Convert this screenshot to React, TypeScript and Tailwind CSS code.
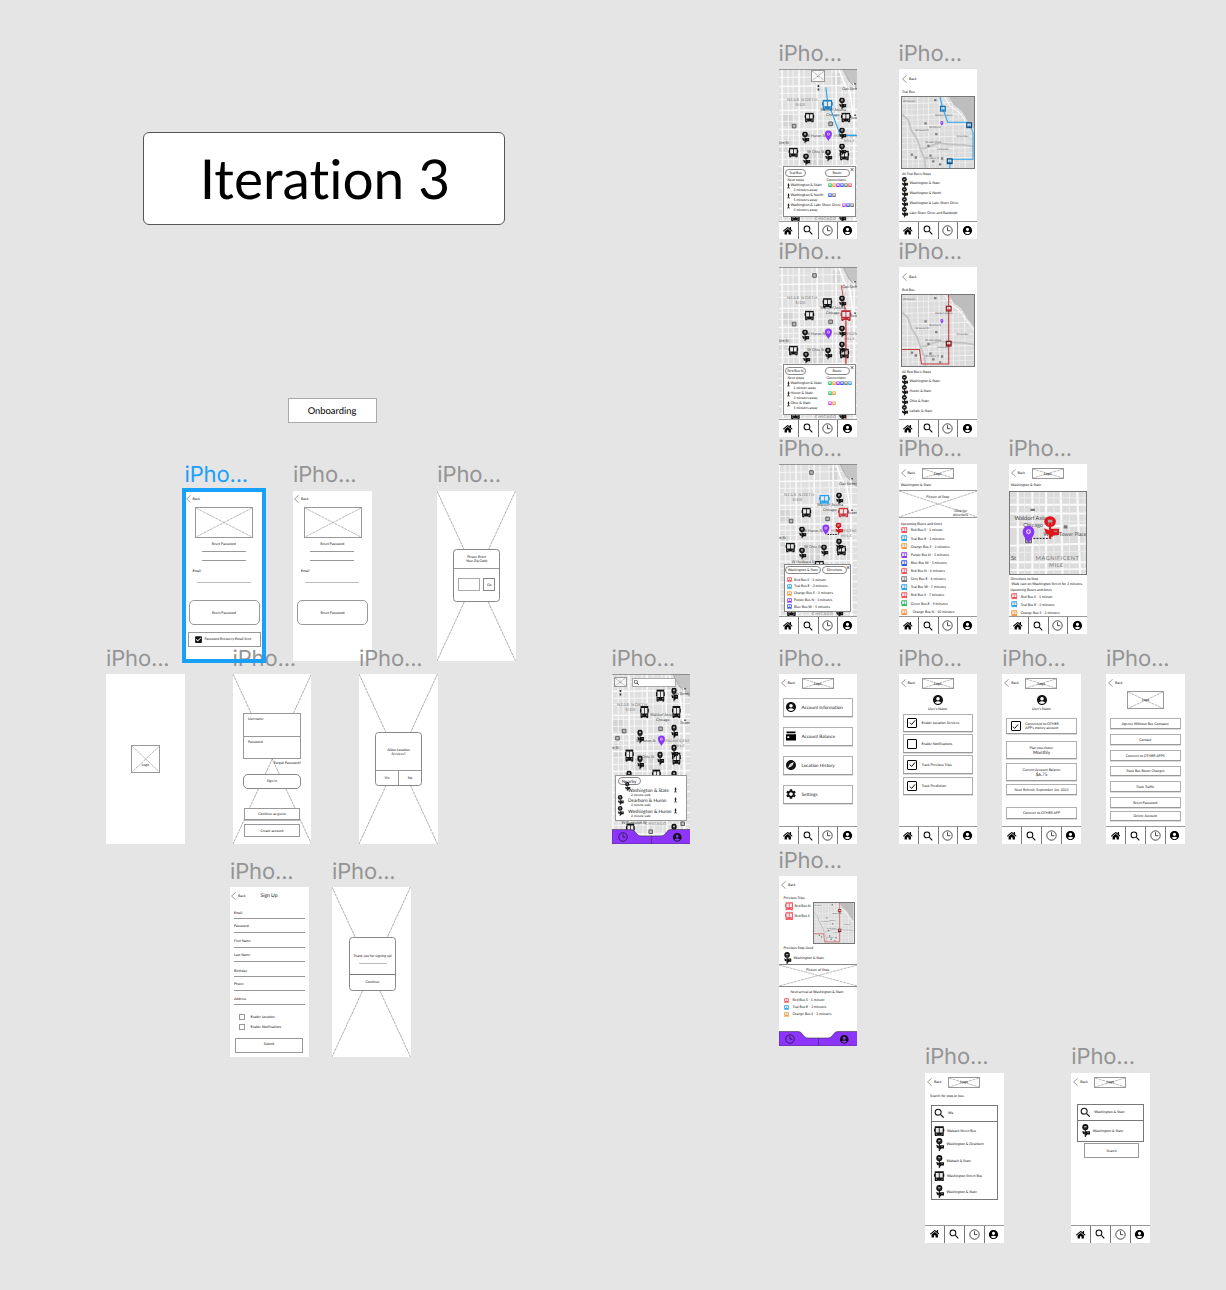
import React from "react";
import { FaHome } from "react-icons/fa";
import { MdAccountCircle, MdSearch, MdExplore, MdSettings, MdCheckBox } from "react-icons/md";

type Kids = { children?: React.ReactNode; className?: string };

const RED = "#f4505a";
const TEAL = "#25a4f0";
const ORANGE = "#f89a3c";
const PURPLE = "#8b35f5";
const BLUE = "#3055f0";
const GRAY = "#777777";
const GREEN = "#25c05a";
const PINK = "#e23be8";

/* ---------- glyphs ---------- */

function BusShape({ x, y, w = 10, h = 10, c = "#111" }: { x: number; y: number; w?: number; h?: number; c?: string }) {
  return (
    <svg x={x - w / 2} y={y - h / 2} width={w} height={h} viewBox="0 0 10 10" preserveAspectRatio="none">
      <path d="M.7.3h8.6v2.2H10v3h-.7v3.700H9V10H7.200V9.200H2.800V10H1V9.200H.7V5.500H0v-3h.7z" fill={c} />
      <path d="M1.700 1.900h2.900v4.300H1.700zM5.400 1.900h2.900v4.300H5.400z" fill="#e8e8e8" />
      <path d="M1.800 7.300h1.100v.7H1.800zM7.100 7.300h1.100v.7H7.100z" fill="#ccc" />
    </svg>
  );
}

function StopShape({ x, y, w = 8, h = 12, c = "#111" }: { x: number; y: number; w?: number; h?: number; c?: string }) {
  return (
    <svg x={x - w / 2} y={y - h / 2} width={w} height={h} viewBox="0 0 8 12" preserveAspectRatio="none">
      <circle cx="3.600" cy="2.900" r="2.800" fill={c} />
      <path d="M2.500 1.900h2.200v1.400H2.500z" fill="#aaa" />
      <path d="M2.600 4.100h.5M4.100 4.100h.5" stroke="#aaa" strokeWidth=".5" />
      <path d="M3.100 5.600h1V12h-1z" fill={c} />
      <path d="M3.600 6.600H8v3.200H5.400l-.6.9H3.600z" fill={c} />
      <path d="M.8 6.300l2.400 1.100v2.200L1.400 9z" fill={c} />
      <path d="M5.400 7.800h1.600" stroke="#aaa" strokeWidth=".5" />
    </svg>
  );
}

function PinShape({ x, y, s = 1 }: { x: number; y: number; s?: number }) {
  return (
    <g transform={`translate(${x} ${y}) scale(${s})`}>
      <path d="M0 5.500C-1.200 3.200-3.500 1.400-3.500-1.400a3.500 3.500 0 017 0C3.500 1.400 1.200 3.200 0 5.500z" fill={PURPLE} />
      <circle cx="0" cy="-1.400" r="1.500" fill="#d9c2fb" />
      <path d="M-.8-1.400h1.600M0-2.200v1.600" stroke={PURPLE} strokeWidth=".5" />
    </g>
  );
}

function Bus({ c = "#111", className = "h-[6px] w-[6px]" }: { c?: string; className?: string }) {
  return (
    <svg viewBox="0 0 10 10" className={`${className} shrink-0`}>
      <BusShape x={5} y={5} c={c} />
    </svg>
  );
}

function Stop({ className = "h-[11px] w-[8px]" }: { className?: string }) {
  return (
    <svg viewBox="0 0 8 12" className={`${className} shrink-0`}>
      <StopShape x={4} y={6} />
    </svg>
  );
}

function Walker() {
  return (
    <svg viewBox="0 0 4 7" className="h-[6px] w-[3px] shrink-0">
      <circle cx="2" cy="1" r="1" fill="#111" />
      <path d="M2 1.800v2.600M2 4.200L1 6.800M2 4.200l1 2.600M.9 3l1.100-.8 1 1" stroke="#111" strokeWidth="1.100" fill="none" />
    </svg>
  );
}

function Clock({ className = "h-[11px] w-[11px]" }: { className?: string }) {
  return (
    <svg viewBox="0 0 11 11" className={className} fill="none" stroke="#111" strokeWidth=".75">
      <circle cx="5.500" cy="5.500" r="4.700" />
      <path d="M5.500 2.200v3.500h2.800" />
    </svg>
  );
}

function WalletCard() {
  return (
    <svg viewBox="0 0 12 12" className="h-[12px] w-[12px] shrink-0">
      <path d="M1.500 1.500h9v1.700h-9zM1 4.300h10V10.500H1z" fill="#000" />
      <path d="M2.300 6.300h2v1.700h-2z" fill="#fff" />
    </svg>
  );
}

function Check({ on = true }: { on?: boolean }) {
  return (
    <span className="grid h-[10px] w-[10px] shrink-0 place-items-center rounded-[1px] border border-black">
      {on && (
        <svg viewBox="0 0 8 8" className="h-[7px] w-[7px]" fill="none" stroke="#000" strokeWidth="1.100">
          <path d="M1 4.200l2 2 4-4.600" />
        </svg>
      )}
    </span>
  );
}

function Cross({ className = "", stroke = "#8b8b8b" }: { className?: string; stroke?: string }) {
  return (
    <svg className={`absolute inset-0 h-full w-full ${className}`} viewBox="0 0 100 100" preserveAspectRatio="none">
      <path d="M0 0L100 100M100 0L0 100" stroke={stroke} strokeWidth=".6" strokeDasharray="3 .7" vectorEffect="non-scaling-stroke" />
    </svg>
  );
}

/* ---------- shared pieces ---------- */

function Frame({ at, children, selected = false }: { at: string; children?: React.ReactNode; selected?: boolean }) {
  return (
    <section className={`absolute ${at} h-[170px] w-[78.5px]`}>
      <h2
        className={`absolute -top-[28.5px] left-0 font-[Inter] text-[22px] leading-[26px] tracking-[-0.15px] whitespace-nowrap ${
          selected ? "text-[#18a0fb]" : "text-[#949494]"
        }`}
      >
        iPho...
      </h2>
      <div className="relative flex h-full w-full flex-col overflow-hidden bg-white text-[3.5px] leading-[4px] text-[#111]">{children}</div>
    </section>
  );
}

function T({ children, className = "" }: Kids) {
  return <p className={`h-[4px] shrink-0 whitespace-nowrap ${className}`}>{children}</p>;
}

function Back({ className = "mt-[5px] ml-[2px]" }: { className?: string }) {
  return (
    <div className={`flex h-[8px] shrink-0 items-center gap-[2px] ${className}`}>
      <svg viewBox="0 0 5 8" className="h-[8px] w-[5px]" fill="none" stroke="#555" strokeWidth=".6">
        <path d="M4.600.3L.6 4l4 3.700" />
      </svg>
      <span>Back</span>
    </div>
  );
}

function LogoBox({ className = "h-[11px] w-[32px]", children = "Logo" }: Kids) {
  return (
    <div className={`relative grid shrink-0 place-items-center border border-[#999] ${className}`}>
      <Cross />
      <span className="relative">{children}</span>
    </div>
  );
}

function Header() {
  return (
    <div className="flex h-[15px] shrink-0 items-end">
      <Back className="mb-[2px] ml-[2px] w-[21px]" />
      <LogoBox />
    </div>
  );
}

function Nav() {
  return (
    <nav className="absolute inset-x-0 bottom-0 flex h-[18px] border-t border-[#999] bg-white text-black">
      <span className="grid w-[20px] place-items-center border-r border-[#777]">
        <FaHome size={9.5} />
      </span>
      <span className="grid w-[20px] place-items-center border-r border-[#777] pr-[.5px]">
        <MdSearch size={12.5} />
      </span>
      <span className="grid w-[19.5px] place-items-center border-r border-[#777]">
        <Clock />
      </span>
      <span className="grid flex-1 place-items-center pr-[1px]">
        <MdAccountCircle size={11} />
      </span>
    </nav>
  );
}

function PurpleNav() {
  return (
    <nav className="absolute inset-x-0 bottom-0 flex h-[15px] items-center justify-between px-[6px] pt-[1px]">
      <svg viewBox="0 0 78.5 15" className="absolute inset-0 h-full w-full">
        <path d="M0 .6H19C24 .6 24 7 29 7H49C54 7 54 .6 59 .6H78.500V15H0z" fill="#8d35ff" stroke="#333" strokeWidth=".6" />
        <path d="M39.500 7v8" stroke="#333" strokeWidth=".6" />
      </svg>
      <Clock className="relative h-[10px] w-[10px]" />
      <MdAccountCircle size={10.5} className="relative mr-[2px]" />
    </nav>
  );
}

function Pill({ children, className = "" }: Kids) {
  return <span className={`grid h-[8px] place-items-center rounded-full border border-[#888] bg-white whitespace-nowrap ${className}`}>{children}</span>;
}

function Card({ children, className = "" }: Kids) {
  return (
    <div className={`mx-[4px] flex shrink-0 items-center border border-[#b0b0b0] border-b-[#999] bg-white whitespace-nowrap shadow-[0_.5px_.5px_#ddd] ${className}`}>
      {children}
    </div>
  );
}

function BusRow({ c, children, className = "" }: Kids & { c: string }) {
  return (
    <div className={`flex shrink-0 items-center whitespace-nowrap ${className}`}>
      <Bus c={c} className="h-[6.5px] w-[6.5px]" />
      <span className="ml-[3px]">{children}</span>
    </div>
  );
}

/* ---------- maps ---------- */

const VERTICALS = [3, 9, 14, 20, 25, 33, 38, 44, 53, 57, 63, 70, 75];
const HORIZONTALS = [8, 17, 24, 30, 41, 45, 52, 60, 66, 71, 77, 83, 90, 97, 104, 111, 118, 125, 132, 139, 146, 151, 160];

function StreetMap({ children, shift = 0 }: { children?: React.ReactNode; shift?: number }) {
  return (
    <svg className="absolute inset-0 h-full w-full" viewBox="0 0 78.5 170" fontFamily="Lato, sans-serif">
      <rect width="79" height="170" fill="#e0e0e0" />
      <g transform={`translate(${shift} 0)`}>
        <path d="M0 70h12v14H0zM25 84h19v13H25zM4 45h10v12H4zM53 4h8v14h-8z" fill="#d4d4d4" />
        <path d="M64 0h20v26L76 18 70 12z" fill="#c4c4c4" />
        <path d="M64 0l6 12 8 8 6 5" stroke="#adadad" strokeWidth="1" fill="none" />
        {VERTICALS.map((x, i) => (
          <path key={x} d={`M${x} ${x > 60 ? 14 : 0}L${x + 1} 170`} stroke="#fafafa" strokeWidth={i % 3 === 0 ? 1.6 : 0.8} />
        ))}
        {HORIZONTALS.map((y, i) => (
          <path key={y} d={`M-2 ${y + 0.5}L${y < 20 ? 66 : 84} ${y - 0.5}`} stroke="#fafafa" strokeWidth={i % 3 === 1 ? 1.4 : 0.8} />
        ))}
        <path d="M60 0l5 14 6 9 4 30v117" stroke="#fff" strokeWidth="1.600" fill="none" />
        <g fontSize="4" fill="#777" letterSpacing=".5">
          <text x="8" y="32">NEAR NORTH</text>
          <text x="16.500" y="37">SIDE</text>
          <text x="55" y="67.500" letterSpacing="0" fontSize="3.8">MAGNIFICENT</text>
          <text x="65" y="72.500">MILE</text>
          <text x="36" y="151">CHICAGO</text>
        </g>
        <g fontSize="3.8" fill="#444">
          <text x="63" y="20.500">Oak Street</text>
          <text x="41" y="42">Waldorf Astoria</text>
          <text x="47" y="46.500">Chicago</text>
          <text x="71" y="50">Tower</text>
          <text x="27" y="67.500">W Huron St</text>
          <text x="-1" y="74.500">Erie St</text>
          <text x="28" y="83.500">W Ohio St</text>
        </g>
        <path d="M13.300 55.300h3.600v3.600h-3.600zM49.800 53h3.600v3.600h-3.600z" fill="#bbb" stroke="#555" strokeWidth=".9" />
        <path d="M76 14v1.500M76 45.500v1.500" stroke="#333" strokeWidth="1.400" />
      </g>
      <path d="M0 .4H79" stroke="#777" strokeWidth=".8" />
      <g transform="translate(-.6 .4)">{children}</g>
    </svg>
  );
}

const CITY_V = [5, 10, 16, 22, 27, 33, 38, 43, 52, 58, 64];
const CITY_H = [6, 12, 18, 23, 29, 35, 41, 47, 53, 58, 63, 68];

function CityMap({ children, className }: Kids) {
  return (
    <svg className={`shrink-0 border border-[#777] ${className}`} viewBox="0 0 74 73" preserveAspectRatio="none" fontFamily="Lato, sans-serif">
      <rect width="74" height="73" fill="#dcdcdc" />
      {CITY_V.map((x, i) => (
        <path key={x} d={`M${x} 0L${x + 1} 73`} stroke="#f3f3f3" strokeWidth={i % 2 ? 0.5 : 0.9} />
      ))}
      {CITY_H.map((y, i) => (
        <path key={y} d={`M0 ${y + 1}L74 ${y - 1}`} stroke="#f3f3f3" strokeWidth={i % 2 ? 0.5 : 0.9} />
      ))}
      <path d="M48 0L53 8 61 14 67 24 74 33V0z" fill="#bdbdbd" />
      <path d="M0 18L6 23 10 35 16 44 19 54 23 63 24 73M20 53C32 53 30 46 43 48S58 48 74 51" stroke="#c2c2c2" strokeWidth="1.800" fill="none" />
      <path d="M44 0l5 9 10 7 7 10 8 10" stroke="#fff" strokeWidth="1" fill="none" />
      <g fontSize="2.6" fill="#555">
        <text x="1" y="5">W Division</text>
        <text x="14" y="35">W Huron St</text>
        <text x="28" y="32">W Ohio St</text>
        <text x="24" y="47">W Lake Street</text>
        <text x="34" y="20">Waldorf Astoria</text>
        <text x="56" y="41">Illinois Bus</text>
        <text x="36" y="55">CHICAGO</text>
        <text x="24" y="64">W Adams St</text>
      </g>
      <path
        d="M33 2h2.400v2.400H33zM23 26h2.400v2.400H23zM34 37h2.400v2.400H34zM9 58h2.400v2.400H9zM13 61h2.400v2.400H13zM28 59h2.400v2.400H28zM26 49h2.400v2.400H26zM31 65h2.400v2.400H31zM40 62h2.400v2.400H40zM38 68h2.400v2.400H38z"
        fill="#808080"
      />
      {children}
    </svg>
  );
}

const RED_ROUTE = (
  <>
    <path d="M48 0V71H20L18 56H0" stroke="#c93a40" strokeWidth="1.100" fill="none" />
    <rect x="45" y="11" width="6" height="6" fill="#7d1d22" />
    <BusShape x={48} y={14} w={5} h={5} c="#c93a40" />
    <rect x="45" y="47" width="6" height="6" fill="#5a1215" />
    <BusShape x={48} y={50} w={5} h={5} c="#a32a30" />
  </>
);

/* ---------- popups ---------- */

type NextStop = { name: string; away: string; colors: string[]; near?: boolean };

function StopsPopup({ bus, stops }: { bus: string; stops: NextStop[] }) {
  return (
    <div className="absolute top-[97px] left-[4px] flex h-[50.5px] w-[73px] flex-col border border-[#888] bg-white">
      <span className="absolute top-[.5px] right-[.5px] text-[7px] leading-[4px] text-[#333]">×</span>
      <div className="mt-[1.5px] flex justify-between pr-[5px] pl-[1.5px]">
        <Pill className="w-[21px]">{bus}</Pill>
        <Pill className="w-[25px]">Route</Pill>
      </div>
      <div className="mt-[1px] flex pl-[4px]">
        <T className="w-[39px]">Next stops</T>
        <T>Connections</T>
      </div>
      {stops.map((s) => (
        <div key={s.name} className="relative mt-[1px] flex h-[9px] shrink-0 items-start gap-[1px] pl-[3px]">
          <Walker />
          <div className={s.near ? "" : "w-[36px] shrink-0"}>
            <T className="text-[3.6px]">{s.name}</T>
            <T className="mt-[1px] pl-[3px]">{s.away}</T>
          </div>
          <div className="flex">
            {s.colors.map((c, i) => (
              <Bus key={i} c={c} className="h-[4.5px] w-[4px]" />
            ))}
          </div>
        </div>
      ))}
    </div>
  );
}

/* ---------- small lists ---------- */

function StopList({ title, stops }: { title: string; stops: string[] }) {
  return (
    <>
      <T className="mt-[3px] mb-[.5px] ml-[3.5px]">{title}</T>
      {stops.map((s) => (
        <div key={s} className="flex h-[10px] shrink-0 items-center gap-[1px] pt-[2px] pl-[2.5px] whitespace-nowrap">
          <Stop className="h-[10.5px] w-[7.5px]" />
          <span>{s}</span>
        </div>
      ))}
    </>
  );
}

function ResetForm() {
  return (
    <>
      <Back className="mt-[4px] ml-[1px]" />
      <LogoBox className="mt-[4px] ml-[10.5px] h-[31px] w-[58px]">{""}</LogoBox>
      <T className="mt-[4.5px] text-center">Reset Password</T>
      <hr className="mt-[5px] ml-[17px] w-[44px] shrink-0 border-[#999]" />
      <hr className="mt-[8px] ml-[17px] w-[44px] shrink-0 border-[#999]" />
      <T className="mt-[8px] ml-[8px]">Email</T>
      <hr className="mt-[9px] ml-[12px] w-[54px] shrink-0 border-[#bbb]" />
      <div className="mt-[17px] ml-[4px] grid h-[25px] w-[71px] shrink-0 place-items-center rounded-[5px] border border-[#999]">Reset Password</div>
    </>
  );
}

function Dialog({ children, className = "" }: Kids) {
  return (
    <>
      <Cross stroke="#777" />
      <div className={`relative ml-[16px] flex h-[53.5px] w-[47px] shrink-0 flex-col rounded-[3.5px] border border-[#888] bg-white text-center ${className}`}>{children}</div>
    </>
  );
}

const UPCOMING: [string, string][] = [
  [RED, "Red Bus S - 1 minute"],
  [TEAL, "Teal Bus E - 2 minutes"],
  [ORANGE, "Orange Bus S - 2 minutes"],
  [PURPLE, "Purple Bus N - 3 minutes"],
  [BLUE, "Blue Bus W - 5 minutes"],
  [RED, "Red Bus N - 6 minutes"],
  [GRAY, "Grey Bus E - 6 minutes"],
  [TEAL, "Teal Bus W - 7 minutes"],
  [RED, "Red Bus S - 7 minutes"],
  [GREEN, "Green Bus E - 9 minutes"],
  [ORANGE, "Orange Bus N - 10 minutes"],
];

const FIELDS: [string, string, string][] = [
  ["Email", "mt-[10.5px]", "mt-[3px]"],
  ["Password", "mt-[5px]", "mt-[4px]"],
  ["First Name", "mt-[6px]", "mt-[4px]"],
  ["Last Name", "mt-[5px]", "mt-[4px]"],
  ["Birthday", "mt-[7px]", "mt-[3px]"],
  ["Phone", "mt-[5px]", "mt-[4px]"],
  ["Address", "mt-[6px]", "mt-[3px]"],
];

const LINKS: [string, string][] = [
  ["Agency Without Bus Company", "mt-[9px]"],
  ["Contact", "mt-[5.5px]"],
  ["Connect to OTHER APPS", "mt-[5.5px]"],
  ["Track Bus Route Changes", "mt-[5px]"],
  ["Track Traffic", "mt-[5px]"],
  ["Reset Password", "mt-[5.5px]"],
  ["Delete Account", "mt-[3px]"],
];

const HOME_BUSES = [[49, 21], [33, 37.5], [65, 37.5], [18, 81], [65, 84], [45, 101], [19, 155]];
const HOME_STOPS = [[63, 20], [29, 62], [63, 57], [63, 77], [49, 84], [29, 88], [18, 103], [63, 103], [63, 156]];

export default function App() {
  return (
    <main className="relative h-[1290px] w-[1226px] overflow-hidden bg-[#e5e5e5] font-[Lato,sans-serif] text-black [font-variant-ligatures:none] [text-rendering:geometricPrecision]">
      <h1 className="absolute top-[132px] left-[143px] grid h-[93px] w-[362px] place-items-center rounded-[6px] border border-[#555] bg-white pl-[2px] text-[55px] leading-none">
        Iteration 3
      </h1>
      <div className="absolute top-[398px] left-[288px] grid h-[25px] w-[89px] place-items-center border border-[#aaa] bg-white pt-[3px] pr-[1px] text-[9.4px] leading-none">
        Onboarding
      </div>

      {/* Bus routes */}
      <Frame at="left-[778.5px] top-[69px]">
        <StreetMap>
          <path d="M47.500 18L49 31 62 66H80" stroke={TEAL} strokeWidth="1.100" fill="none" />
          <BusShape x={31} y={48} />
          <BusShape x={67.5} y={48} />
          <BusShape x={15} y={83} />
          <BusShape x={66} y={86} />
          <StopShape x={64} y={34} />
          <StopShape x={27} y={68} />
          <StopShape x={64} y={64} />
          <StopShape x={50} y={86} />
          <StopShape x={64} y={80} />
          <StopShape x={28} y={90} />
          <BusShape x={49} y={35.5} w={11} h={11} c="#1a7fc0" />
          <PinShape x={50} y={66} />
          <BusShape x={17} y={147} />
          <StopShape x={64} y={147} />
          <path d="M40 15.500v2M40 19v2" stroke="#333" strokeWidth="1.600" />
        </StreetMap>
        <LogoBox className="absolute top-[1px] left-[32px] h-[11.5px] w-[14.5px] bg-white/70">⌄</LogoBox>
        <StopsPopup
          bus="Teal Bus"
          stops={[
            { name: "Washington & State", away: "2 minutes away", colors: [GREEN, ORANGE, PURPLE, BLUE, GRAY, RED] },
            { name: "Washington & North", away: "5 minutes away", colors: [BLUE, GRAY] },
            { name: "Washington & Lake Shore Drive", away: "5 minutes away", colors: [PINK, BLUE, GRAY], near: true },
          ]}
        />
        <Nav />
      </Frame>

      <Frame at="left-[898.5px] top-[69px]">
        <Back className="mt-[5.5px] ml-[3.5px]" />
        <T className="mt-[7px] ml-[3.5px]">Teal Bus</T>
        <CityMap className="mt-[2.5px] ml-[2.5px] h-[73px] w-[74px]">
          <path d="M39 0L42 12 47 26H68L73 36V64H50L49 73" stroke={TEAL} strokeWidth="1.100" fill="none" />
          <rect x="39" y="9" width="6" height="6" fill="#10639b" />
          <BusShape x={42} y={12} w={5} h={5} c="#2b9be0" />
          <rect x="66" y="26" width="6" height="6" fill="#0d3f66" />
          <BusShape x={69} y={29} w={5} h={5} c="#2b7fc0" />
          <rect x="46" y="63" width="6" height="6" fill="#0d3f66" />
          <BusShape x={49} y={66} w={5} h={5} c="#1a7fc0" />
          <PinShape x={41} y={27} s={0.45} />
        </CityMap>
        <StopList title="All Teal Bus's Stops" stops={["Washington & State", "Washington & North", "Washington & Lake Shore Drive", "Lake Shore Drive and Randolph"]} />
        <Nav />
      </Frame>

      <Frame at="left-[778.5px] top-[267px]">
        <StreetMap>
          <path d="M63 18L67.500 48V170" stroke="#d0353c" strokeWidth=".9" fill="none" />
          <path d="M34.300 6.300h3.600v3.600h-3.600z" fill="#bbb" stroke="#555" strokeWidth=".9" />
          <BusShape x={49} y={35.5} />
          <BusShape x={31} y={48} />
          <BusShape x={67.5} y={48} w={11} h={11} c="#b92d33" />
          <BusShape x={15} y={83} />
          <BusShape x={66} y={86} />
          <StopShape x={64} y={34} />
          <StopShape x={27} y={68} />
          <StopShape x={64} y={64} />
          <StopShape x={50} y={86} />
          <StopShape x={64} y={80} />
          <StopShape x={28} y={90} />
          <PinShape x={50} y={66} />
          <BusShape x={17} y={147} />
          <StopShape x={64} y={147} />
          <path d="M67.500 54V97" stroke="#d0353c" strokeWidth=".7" />
        </StreetMap>
        <StopsPopup
          bus="Red Bus N"
          stops={[
            { name: "Washington & State", away: "1 minute away", colors: [GREEN, ORANGE, PURPLE, BLUE, GRAY, TEAL] },
            { name: "Huron & State", away: "3 minutes away", colors: [GREEN, ORANGE] },
            { name: "Ohio & State", away: "5 minutes away", colors: [PINK, ORANGE] },
          ]}
        />
        <Nav />
      </Frame>

      <Frame at="left-[898.5px] top-[267px]">
        <Back className="mt-[5.5px] ml-[3.5px]" />
        <T className="mt-[7px] ml-[3.5px]">Red Bus</T>
        <CityMap className="mt-[2.5px] ml-[2.5px] h-[73px] w-[74px]">
          {RED_ROUTE}
          <PinShape x={41} y={27} s={0.45} />
        </CityMap>
        <StopList title="All Red Bus's Stops" stops={["Washington & State", "Huron & State", "Ohio & State", "LaSalle & State"]} />
        <Nav />
      </Frame>

      {/* Stop details */}
      <Frame at="left-[778.5px] top-[464.3px]">
        <StreetMap shift={-3}>
          <path d="M31.300 6.300h3.600v3.600h-3.600z" fill="#bbb" stroke="#555" strokeWidth=".9" />
          <BusShape x={46} y={35} w={11} h={10} c={TEAL} />
          <BusShape x={28} y={48} />
          <BusShape x={65} y={48} w={11} h={10} c="#c93a40" />
          <BusShape x={12} y={83} />
          <BusShape x={63} y={86} />
          <BusShape x={41} y={101} />
          <StopShape x={61} y={34} />
          <StopShape x={24} y={68} />
          <StopShape x={24} y={89} />
          <StopShape x={46} y={86} />
          <StopShape x={61} y={80} />
          <path d="M49 70H60" stroke="#111" strokeWidth="1" strokeDasharray="1.6 1" />
          <StopShape x={60.5} y={64} c="#d9141c" />
          <PinShape x={47.5} y={65} />
          <BusShape x={13} y={147} />
          <StopShape x={61} y={147} />
          <text x="13" y="98.500" fontSize="3.8" fill="#444">
            W Hubbard St
          </text>
        </StreetMap>
        <div className="absolute top-[100px] left-[5.5px] flex h-[48px] w-[67px] flex-col border border-[#888] bg-white">
          <span className="absolute top-[.5px] right-0 text-[7px] leading-[4px] text-[#333]">×</span>
          <div className="mt-[1px] mb-[2px] flex gap-[1px]">
            <Pill className="w-[36px]">Washington & State</Pill>
            <Pill className="w-[25px]">Directions</Pill>
          </div>
          {UPCOMING.slice(0, 5).map(([c, t]) => (
            <div key={t} className="flex h-[6.8px] shrink-0 items-center gap-[2px] pl-[2px] whitespace-nowrap">
              <Bus c={c} className="h-[5px] w-[5px]" />
              {t}
            </div>
          ))}
        </div>
        <Nav />
      </Frame>

      <Frame at="left-[898.5px] top-[464.3px]">
        <Header />
        <T className="mt-[3.5px] ml-[2.3px]">Washington & State</T>
        <div className="relative mt-[3px] flex h-[28px] shrink-0 flex-col border-y border-[#999]">
          <Cross />
          <T className="relative mt-[4px] text-center">Picture of Stop</T>
          <T className="relative mt-[10.5px] mr-[10px] text-right">Click for</T>
          <T className="relative mr-[9px] text-right">directions</T>
        </div>
        <T className="mt-[4px] ml-[2.3px]">Upcoming Buses and times</T>
        <div className="mt-[.5px] flex flex-col">
          {UPCOMING.map(([c, t], i) => (
            <BusRow key={i} c={c} className={i === 10 ? "h-[8.15px] pl-[2.7px] [&>span]:ml-[5px]" : "h-[8.15px] pl-[2.7px]"}>
              {t}
            </BusRow>
          ))}
        </div>
        <Nav />
      </Frame>

      <Frame at="left-[1008.5px] top-[464.3px]">
        <Header />
        <T className="mt-[3.5px] ml-[2.3px]">Washington & State</T>
        <svg viewBox="0 0 78.5 84" className="mt-[4px] h-[84px] w-full shrink-0 border border-[#777]" fontFamily="Lato, sans-serif">
          <rect width="79" height="84" fill="#dcdcdc" />
          <path d="M8 0V84M23 0V84M37 0V84M52 0L54 84M69 0L72 84" stroke="#fafafa" strokeWidth="2.200" />
          <path d="M0 13H79M0 22H79M0 36L79 34M0 55L79 53M0 72H79M0 80L79 79" stroke="#fafafa" strokeWidth="1.900" />
          <path d="M15 0V84M30 0V84M45 0V84M61 0V84M76 0V84M0 6H79M0 62L79 61M0 30H79" stroke="#eee" strokeWidth="1" />
          <g fontSize="5.8" fill="#444">
            <text x="4.500" y="28.500">Waldorf Astoria</text>
            <text x="13.500" y="35.500">Chicago</text>
            <text x="1" y="70">St</text>
            <text x="34.500" y="45.500" fontSize="5.4">Water Tower Place</text>
          </g>
          <g fontSize="5.6" fill="#777" letterSpacing=".6">
            <text x="26.500" y="69.500">MAGNIFICENT</text>
            <text x="40" y="77">MILE</text>
          </g>
          <path d="M21 17h4.500v2.500H21zM55 34h4v3.500H55z" fill="#777" />
          <path d="M16 46h6v6h-6z" fill="#bbb" stroke="#555" />
          <path d="M24 47.500H41" stroke="#111" strokeWidth="1" strokeDasharray="2 1.2" />
          <PinShape x={19} y={43} s={1.7} />
          <StopShape x={42} y={36.5} w={17} h={24} c="#e0161c" />
        </svg>
        <T className="mt-[2px] ml-[2px]">Directions to Stop</T>
        <T className="mt-[1.7px] ml-[3px]">Walk east on Washington Street for 2 minutes.</T>
        <T className="mt-[2px] ml-[2px]">Upcoming Buses and times</T>
        {UPCOMING.slice(0, 3).map(([c, t]) => (
          <BusRow key={t} c={c} className="h-[8.15px] pl-[2.7px]">
            {t}
          </BusRow>
        ))}
        <Nav />
      </Frame>

      {/* Home */}
      <Frame at="left-[611.5px] top-[674px]">
        <StreetMap shift={-3}>
          {HOME_BUSES.map(([x, y]) => (
            <BusShape key={`${x}-${y}`} x={x} y={y} w={9} h={12.5} />
          ))}
          {HOME_STOPS.map(([x, y]) => (
            <StopShape key={`${x}-${y}`} x={x} y={y} w={7.5} h={14} />
          ))}
          <PinShape x={50} y={66} />
          <path d="M4.300 62h3.600v3.600H4.300zM37.500 155.500h3.600v3.600h-3.600zM69.500 147.500h3.600v3.600h-3.600z" fill="#bbb" stroke="#555" strokeWidth=".9" />
          <path d="M9 15.500v2M9 19v2" stroke="#333" strokeWidth="1.600" />
          <text x="10" y="150" fontSize="3.8" fill="#444">
            W Randolph St
          </text>
        </StreetMap>
        <div className="relative flex h-[13px] items-end gap-[5px] pl-[2.5px]">
          <LogoBox className="h-[10px] w-[12.5px] bg-white/60">⌄</LogoBox>
          <div className="h-[9.5px] w-[44px] border border-[#aaa] bg-white">
            <MdSearch size={7} />
          </div>
        </div>
        <div className="absolute top-[101px] left-[3px] flex h-[46px] w-[72.5px] flex-col border border-[#999] bg-white">
          <Pill className="mt-[1px] ml-[2px] w-[23px] text-[4.6px]">Nearby</Pill>
          <Stop className="absolute top-[6px] left-[8px] h-[9px] w-[7px]" />
          {["Washington & State", "Dearborn & Huron", "Washington & Huron"].map((s, i) => (
            <div key={s} className="mt-[.5px] flex h-[10px] shrink-0 items-start pl-[1px]">
              <div className="w-[11.5px]">{i > 0 && <Stop className="-mt-[1px] h-[10px] w-[7px]" />}</div>
              <div className="w-[46px]">
                <T className="pt-[2px] text-[4.7px]">{s}</T>
                <T className="mt-[1.5px] pt-[1.5px] pl-[3px] text-[3.2px]">2 minute walk</T>
              </div>
              <div className="pt-[1px]">
                <Walker />
              </div>
            </div>
          ))}
        </div>
        <PurpleNav />
      </Frame>

      {/* Account */}
      <Frame at="left-[778.5px] top-[674.3px]">
        <Header />
        <div className="mt-[8.5px] flex flex-col gap-[10px] text-[4.6px]">
          <Card className="h-[19px] gap-[4.5px] pl-[1.5px]"><MdAccountCircle size={12} />Account Information</Card>
          <Card className="h-[19px] gap-[4.5px] pl-[1.5px]"><WalletCard />Account Balance</Card>
          <Card className="h-[19px] gap-[4.5px] pl-[1.5px]"><MdExplore size={12} />Location History</Card>
          <Card className="h-[19px] gap-[4.5px] pl-[1.5px]"><MdSettings size={12} />Settings</Card>
        </div>
        <Nav />
      </Frame>

      <Frame at="left-[898.5px] top-[674.3px]">
        <Header />
        <MdAccountCircle size={12} className="mx-auto mt-[4.5px] shrink-0" />
        <T className="mt-[1.5px] text-center">User's Name</T>
        <Card className="mt-[2.5px] h-[18px] gap-[4.5px] pl-[3.5px]"><Check />Enable Location Services</Card>
        <Card className="mt-[2.5px] h-[18.5px] gap-[4.5px] pl-[3.5px]"><Check on={false} />Enable Notifications</Card>
        <Card className="mt-[2.5px] h-[18.5px] gap-[4.5px] pl-[3.5px]"><Check />Track Previous Trips</Card>
        <Card className="mt-[3px] h-[18.5px] gap-[4.5px] pl-[3.5px]"><Check />Track Prediction</Card>
        <Nav />
      </Frame>

      <Frame at="left-[1002.3px] top-[674.3px]">
        <Header />
        <MdAccountCircle size={12} className="mx-auto mt-[4.5px] shrink-0" />
        <T className="mt-[1.5px] text-center">User's Name</T>
        <Card className="mt-[7px] h-[15.5px] gap-[4.5px] pl-[3.5px]">
          <Check />
          <span>Connected to OTHER<br />APP's money account</span>
        </Card>
        <Card className="mt-[7.5px] h-[18px] flex-col justify-center text-center">
          <span>Plan you chose:</span>
          <span className="text-[4.6px]">Monthly</span>
        </Card>
        <Card className="mt-[4px] h-[17.5px] flex-col justify-center text-center">
          <span>Current Account Balance</span>
          <span className="text-[4.6px]">$6.75</span>
        </Card>
        <Card className="mt-[3.5px] h-[11px] justify-center">Next Refresh: September 1st, 2023</Card>
        <Card className="mt-[11.5px] h-[12px] justify-center">Connect to OTHER APP</Card>
        <Nav />
      </Frame>

      <Frame at="left-[1106px] top-[674.3px]">
        <Back />
        <LogoBox className="mt-[3.5px] ml-[21px] h-[18.5px] w-[37px]" />
        {LINKS.map(([t, mt]) => (
          <Card key={t} className={`h-[10.5px] justify-center ${mt}`}>
            {t}
          </Card>
        ))}
        <Nav />
      </Frame>

      {/* History */}
      <Frame at="left-[778.5px] top-[876px]">
        <Back className="mt-[5px] ml-[2.5px]" />
        <T className="mt-[6.5px] ml-[5px]">Previous Trips</T>
        <div className="mt-[2.5px] flex h-[42px] shrink-0 justify-between pr-[2.5px] pl-[6px]">
          <div className="flex flex-col gap-[1px]">
            <div className="flex items-center gap-[1.5px] whitespace-nowrap"><Bus c={RED} className="h-[8.5px] w-[8.5px]" />Red Bus N</div>
            <div className="flex items-center gap-[1.5px] whitespace-nowrap"><Bus c={RED} className="h-[8.5px] w-[8.5px]" />Red Bus S</div>
          </div>
          <CityMap className="h-[42px] w-[41.5px]">{RED_ROUTE}</CityMap>
        </div>
        <T className="mt-[2px] ml-[5px]">Previous Stop Used</T>
        <div className="mt-[2px] flex h-[12px] shrink-0 items-center gap-[1.5px] pl-[4.5px]"><Stop className="h-[12px] w-[9px]" />Washington & State</div>
        <div className="relative h-[23px] shrink-0 border-y border-[#888]">
          <Cross />
          <T className="relative mt-[3px] text-center">Picture of Stop</T>
        </div>
        <T className="mt-[2.5px] ml-[12px]">Next arrival at Washington & State</T>
        <div className="mt-[3px] flex flex-col">
          {UPCOMING.slice(0, 3).map(([c, t]) => (
            <div key={t} className="flex h-[7px] items-center gap-[4px] pl-[5px] whitespace-nowrap">
              <Bus c={c} className="h-[5px] w-[5px]" />
              {t}
            </div>
          ))}
        </div>
        <PurpleNav />
      </Frame>

      {/* Search */}
      <Frame at="left-[925px] top-[1072.6px]">
        <Header />
        <T className="mt-[6px] ml-[5px]">Search for stop or bus.</T>
        <div className="mt-[7px] ml-[6px] flex h-[95.5px] w-[67px] shrink-0 flex-col border border-[#777] whitespace-nowrap">
          <div className="flex h-[16px] items-center gap-[2px] border-b border-[#777] pl-[1px]"><MdSearch size={13} />Wa</div>
          <div className="mt-[4px] flex h-[11px] items-center gap-[2.5px] pl-[2px]"><Bus className="h-[10.5px] w-[10.5px]" />Wabash Street Bus</div>
          <div className="mt-[1px] flex h-[13px] items-center gap-[2.5px] pl-[2.5px]"><Stop className="h-[13px] w-[9.5px]" />Washington & Dearborn</div>
          <div className="mt-[4px] flex h-[13px] items-center gap-[2.5px] pl-[2.5px]"><Stop className="h-[13px] w-[9.5px]" />Wabash & State</div>
          <div className="mt-[2px] flex h-[13px] items-center gap-[2.5px] pl-[2px]"><Bus className="h-[10.5px] w-[10.5px]" />Washington Street Bus</div>
          <div className="mt-[2.5px] flex h-[13px] items-center gap-[2.5px] pl-[2.5px]"><Stop className="h-[13px] w-[9.5px]" />Washington & State</div>
        </div>
        <Nav />
      </Frame>

      <Frame at="left-[1071.3px] top-[1072.8px]">
        <Header />
        <div className="mt-[16px] ml-[6px] flex h-[38px] w-[66.5px] shrink-0 flex-col border border-[#777] whitespace-nowrap">
          <div className="flex h-[16px] items-center gap-[2px] border-b border-[#777] pl-[1px]"><MdSearch size={13} />Washington & State</div>
          <div className="flex flex-1 items-center gap-[2.5px] pl-[2.5px]"><Stop className="h-[13px] w-[9.5px]" />Washington & State</div>
        </div>
        <div className="mt-[1.5px] ml-[13px] grid h-[14.5px] w-[54.5px] shrink-0 place-items-center border border-[#999]">Search</div>
        <Nav />
      </Frame>

      {/* Onboarding */}
      <Frame at="left-[184.5px] top-[490.6px]" selected>
        <ResetForm />
        <div className="mt-[7px] ml-[3px] flex h-[14.5px] w-[73px] shrink-0 items-center gap-[2px] border border-[#999] pl-[5px] whitespace-nowrap">
          <MdCheckBox size={9} />
          Password Recovery Email Sent
        </div>
      </Frame>

      <Frame at="left-[293px] top-[490.6px]">
        <ResetForm />
      </Frame>

      <Frame at="left-[437.3px] top-[490.6px]">
        <Dialog className="mt-[58.2px]">
          <div className="h-[19px] border-b border-[#999] pt-[5.5px]">
            <T>Please Enter</T>
            <T>Your Zip Code</T>
          </div>
          <div className="mt-[9.5px] flex justify-between px-[4px]">
            <span className="h-[12.5px] w-[22px] border border-[#aaa]" />
            <span className="grid h-[12.5px] w-[12px] place-items-center border border-[#888]">Go</span>
          </div>
        </Dialog>
      </Frame>

      <Frame at="left-[106px] top-[674.3px]">
        <div className="relative mt-[70.5px] ml-[24.5px] h-[28px] w-[29.5px] shrink-0 border border-[#999] pt-[17px] text-center">
          <Cross />
          <T className="relative">Logo</T>
        </div>
      </Frame>

      <Frame at="left-[232.5px] top-[674.3px]">
        <Cross stroke="#777" />
        <div className="relative mt-[38.5px] ml-[10.5px] h-[46.5px] w-[58px] shrink-0 border border-[#999] bg-white">
          <div className="h-[23px] border-b border-[#999] pt-[3px] pl-[4px]"><T>Username</T></div>
          <div className="pt-[3px] pl-[4px]"><T>Password</T></div>
        </div>
        <T className="relative mt-[1.5px] mr-[10px] text-right">Forgot Password?</T>
        <div className="relative mt-[9px] ml-[10.5px] grid h-[15px] w-[58px] shrink-0 place-items-center rounded-[5px] border border-[#888] bg-white">Sign In</div>
        <div className="relative mt-[19.5px] ml-[11.5px] grid h-[12px] w-[56px] shrink-0 place-items-center border border-[#999] bg-white shadow-[0_.5px_.5px_#bbb]">Continue as guest</div>
        <div className="relative mt-[4px] ml-[11.5px] grid h-[13px] w-[56px] shrink-0 place-items-center border border-[#999] bg-white">Create account</div>
      </Frame>

      <Frame at="left-[359px] top-[674.3px]">
        <Dialog className="mt-[58px]">
          <div className="h-[37px] pt-[15px]">
            <T>Allow Location</T>
            <T>Services?</T>
          </div>
          <div className="flex flex-1 border-t border-[#999]">
            <span className="grid flex-1 place-items-center border-r border-[#999]">Yes</span>
            <span className="grid flex-1 place-items-center">No</span>
          </div>
        </Dialog>
      </Frame>

      <Frame at="left-[230px] top-[887px]">
        <div className="flex h-[13px] items-end">
          <Back className="ml-[1px] w-[29.5px]" />
          <span className="mb-[1.5px] text-[5px] leading-[5px]">Sign Up</span>
        </div>
        {FIELDS.map(([label, a, b]) => (
          <div key={label} className={`mx-[4px] shrink-0 border-b border-[#999] ${a}`}>
            <T>{label}</T>
            <div className={b} />
          </div>
        ))}
        <div className="mt-[10px] flex h-[5px] shrink-0 items-center gap-[6px] pl-[9px]"><span className="h-[5.5px] w-[5.5px] border border-[#999]" />Enable Location</div>
        <div className="mt-[5px] flex h-[5px] shrink-0 items-center gap-[6px] pl-[9px]"><span className="h-[5.5px] w-[5.5px] border border-[#999]" />Enable Notifications</div>
        <div className="mt-[8.5px] ml-[5px] grid h-[15px] w-[68px] shrink-0 place-items-center border border-[#999] pb-[3px]">Submit</div>
      </Frame>

      <Frame at="left-[332px] top-[887px]">
        <Dialog className="mt-[50px] ml-[17px]">
          <div className="flex h-[37px] flex-col items-center border-b border-[#777] pt-[15.5px]">
            <T>Thank you for signing up!</T>
            <hr className="mt-[5px] w-[28px] border-[#bbb]" />
          </div>
          <span className="grid flex-1 place-items-center">Continue</span>
        </Dialog>
      </Frame>

      <div className="pointer-events-none absolute top-[488px] left-[182px] h-[175px] w-[84px] border-4 border-[#18a0fb]" />
    </main>
  );
}
